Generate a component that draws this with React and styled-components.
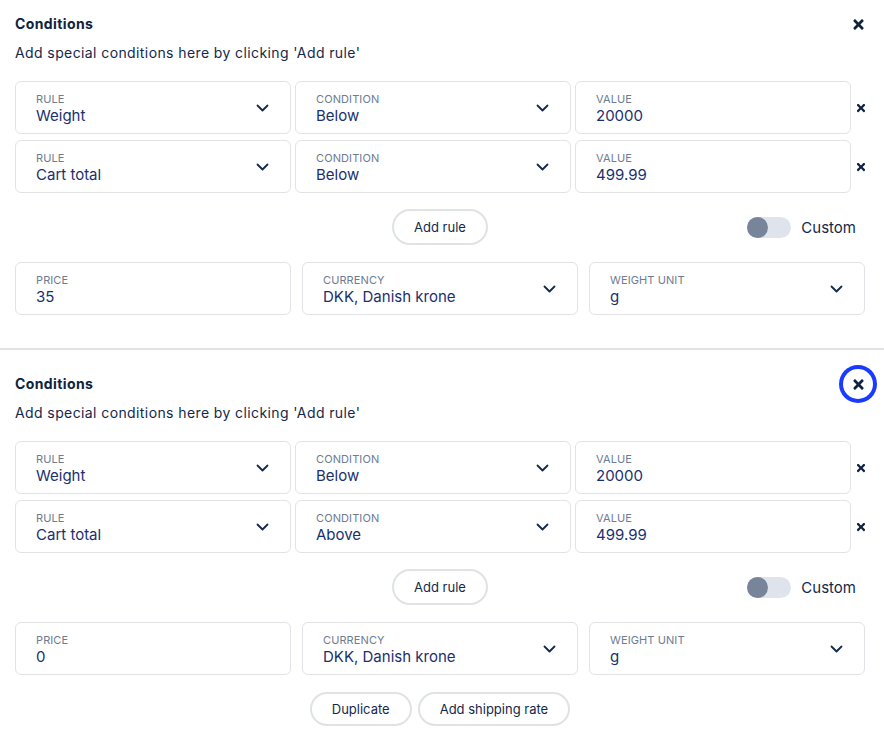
import React, { useState } from "react";
import styled, { createGlobalStyle } from "styled-components";
import { FaTimes } from "react-icons/fa";

const GlobalStyle = createGlobalStyle`
  body {
    margin: 0;
    background: #ffffff;
    font-family: "Inter", "Liberation Sans", sans-serif;
    color: #14284b;
  }
`;

const sections = [
  {
    rules: [
      { rule: "Weight", condition: "Below", value: "20000" },
      { rule: "Cart total", condition: "Below", value: "499.99" },
    ],
    price: "35",
    focused: false,
    first: true,
  },
  {
    rules: [
      { rule: "Weight", condition: "Below", value: "20000" },
      { rule: "Cart total", condition: "Above", value: "499.99" },
    ],
    price: "0",
    focused: true,
    last: true,
  },
];

const Chevron = () => (
  <svg width="13" height="8" viewBox="0 0 13 8" fill="none">
    <path d="M1.5 1.5l5 5 5-5" stroke="#14284b" strokeWidth="1.8" strokeLinecap="round" strokeLinejoin="round" />
  </svg>
);

const Field = ({ label, value, select }) => (
  <FieldBox>
    <FieldText>
      <FieldLabel>{label}</FieldLabel>
      <FieldValue>{value}</FieldValue>
    </FieldText>
    {select && <Chevron />}
  </FieldBox>
);

const Toggle = () => {
  const [on, setOn] = useState(false);
  return (
    <ToggleWrap onClick={() => setOn(!on)}>
      <Track $on={on}>
        <Knob $on={on} />
      </Track>
      <ToggleLabel>Custom</ToggleLabel>
    </ToggleWrap>
  );
};

const Section = ({ data }) => (
  <SectionBox $first={data.first} $last={data.last}>
    <Header>
      <Title>Conditions</Title>
      <CloseButton $focused={data.focused}>
        <FaTimes size={15} />
      </CloseButton>
    </Header>
    <Subtitle>Add special conditions here by clicking 'Add rule'</Subtitle>
    <RuleGrid>
      {data.rules.map((r, i) => (
        <React.Fragment key={i}>
          <Field label="RULE" value={r.rule} select />
          <Field label="CONDITION" value={r.condition} select />
          <Field label="VALUE" value={r.value} />
          <RemoveCell>
            <FaTimes size={12} />
          </RemoveCell>
        </React.Fragment>
      ))}
    </RuleGrid>
    <ActionRow>
      <span />
      <PillButton>Add rule</PillButton>
      <Toggle />
    </ActionRow>
    <PriceGrid>
      <Field label="PRICE" value={data.price} />
      <Field label="CURRENCY" value="DKK, Danish krone" select />
      <Field label="WEIGHT UNIT" value="g" select />
    </PriceGrid>
    {data.last && (
      <FooterRow>
        <PillButton $small>Duplicate</PillButton>
        <PillButton $small>Add shipping rate</PillButton>
      </FooterRow>
    )}
  </SectionBox>
);

const App = () => (
  <>
    <GlobalStyle />
    <Page>
      {sections.map((s, i) => (
        <Section key={i} data={s} />
      ))}
    </Page>
  </>
);

export default App;

const Page = styled.div`
  width: 884px;
`;

const SectionBox = styled.section`
  padding: ${(p) => (p.$first ? "14px" : "24px")} 15px ${(p) => (p.$last ? "14px" : "33px")};
  border-bottom: ${(p) => (p.$last ? "none" : "2px solid #dfe3e3")};
`;

const Header = styled.div`
  display: flex;
  align-items: center;
  justify-content: space-between;
  height: 20px;
`;

const Title = styled.h2`
  margin: 0;
  font-size: 14px;
  line-height: 20px;
  font-weight: 700;
  letter-spacing: 0.4px;
  color: #0f2340;
`;

const CloseButton = styled.button`
  width: 30px;
  height: 30px;
  margin: -5px -4px -5px 0;
  border: none;
  border-radius: 50%;
  background: transparent;
  color: #0f2340;
  display: flex;
  align-items: center;
  justify-content: center;
  padding: 0;
  cursor: pointer;
  box-shadow: ${(p) => (p.$focused ? "0 0 0 4px #1a3bff" : "none")};
`;

const Subtitle = styled.p`
  margin: 9px 0 18px;
  font-size: 14px;
  line-height: 20px;
  letter-spacing: 0.4px;
  color: #14284b;
`;

const RuleGrid = styled.div`
  display: grid;
  grid-template-columns: repeat(3, 276px) auto;
  column-gap: 4px;
  row-gap: 6px;
`;

const RemoveCell = styled.div`
  display: flex;
  align-items: center;
  color: #0f2340;
`;

const FieldBox = styled.div`
  box-sizing: border-box;
  height: 53px;
  border: 1px solid #e1e3e7;
  border-radius: 6px;
  padding: 0 21px 0 20px;
  display: flex;
  align-items: center;
  justify-content: space-between;
  background: #fff;
`;

const FieldText = styled.div`
  display: flex;
  flex-direction: column;
  padding-top: 3px;
`;

const FieldLabel = styled.span`
  font-size: 11px;
  line-height: 14px;
  color: #6e7b91;
  letter-spacing: 0.1px;
`;

const FieldValue = styled.span`
  font-size: 15px;
  line-height: 20px;
  color: #1b2f70;
`;

const ActionRow = styled.div`
  display: grid;
  grid-template-columns: 1fr auto 1fr;
  align-items: center;
  margin: 16px 0 17px;
  padding-right: 4px;
`;

const PillButton = styled.button`
  box-sizing: border-box;
  height: ${(p) => (p.$small ? "34px" : "36px")};
  padding: 0 20px;
  border: 2px solid #dfe3e3;
  border-radius: 18px;
  background: #fff;
  font-family: inherit;
  font-size: 13px;
  color: #14284b;
  cursor: pointer;
`;

const ToggleWrap = styled.div`
  display: flex;
  align-items: center;
  justify-content: flex-end;
  gap: 10px;
  padding-right: 9px;
  cursor: pointer;
`;

const Track = styled.div`
  width: 44px;
  height: 21px;
  border-radius: 11px;
  background: ${(p) => (p.$on ? "#1a3bff" : "#dfe3ec")};
  display: flex;
  justify-content: ${(p) => (p.$on ? "flex-end" : "flex-start")};
`;

const Knob = styled.div`
  width: 21px;
  height: 21px;
  border-radius: 50%;
  background: ${(p) => (p.$on ? "#fff" : "#788499")};
`;

const ToggleLabel = styled.span`
  font-size: 15px;
  color: #14284b;
`;

const PriceGrid = styled.div`
  display: grid;
  grid-template-columns: repeat(3, 276px);
  column-gap: 11px;
`;

const FooterRow = styled.div`
  display: flex;
  justify-content: center;
  gap: 6px;
  margin-top: 17px;
  padding-right: 4px;
`;
